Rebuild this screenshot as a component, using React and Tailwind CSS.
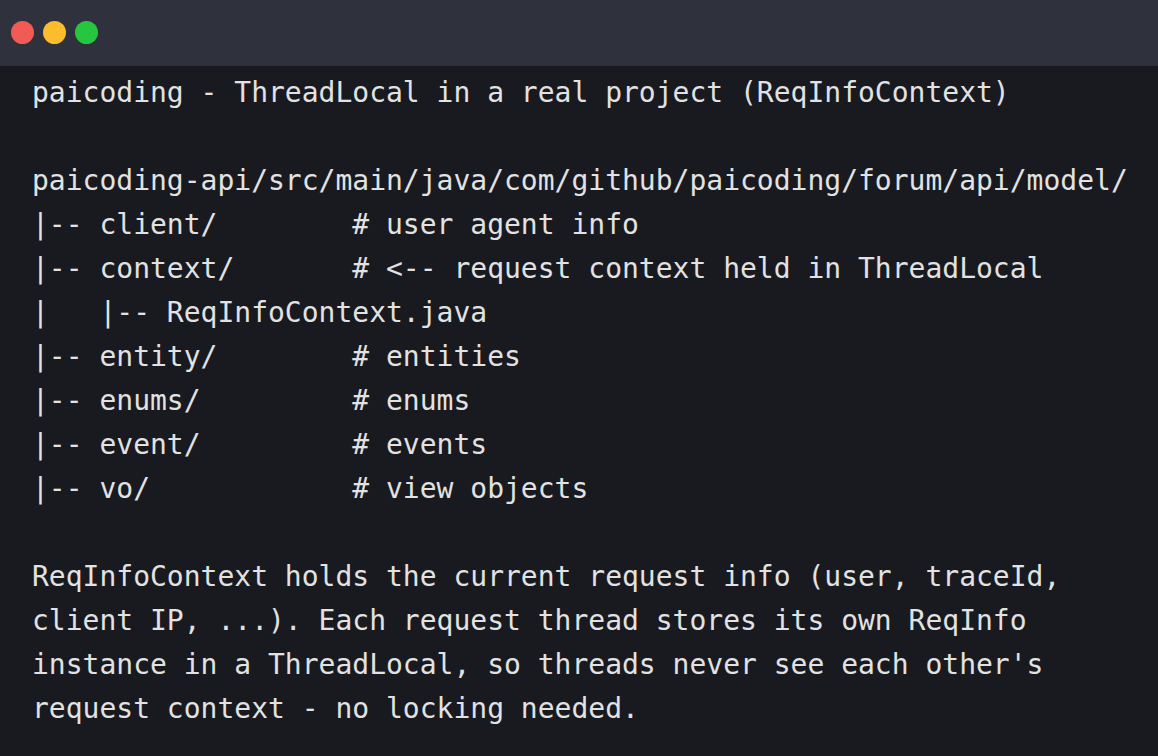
const lines = [
  'paicoding - ThreadLocal in a real project (ReqInfoContext)',
  '',
  'paicoding-api/src/main/java/com/github/paicoding/forum/api/model/',
  '|-- client/        # user agent info',
  '|-- context/       # <-- request context held in ThreadLocal',
  '|   |-- ReqInfoContext.java',
  '|-- entity/        # entities',
  '|-- enums/         # enums',
  '|-- event/         # events',
  '|-- vo/            # view objects',
  '',
  'ReqInfoContext holds the current request info (user, traceId,',
  'client IP, ...). Each request thread stores its own ReqInfo',
  "instance in a ThreadLocal, so threads never see each other's",
  'request context - no locking needed.',
];

export default function App() {
  return (
    <div className="w-[1158px] h-[756px] bg-[#181a20] overflow-hidden">
      <div className="h-[66px] bg-[#2f323c] flex items-center gap-[9px] pl-[11px] pb-[1px]">
        <span className="w-[23px] h-[23px] rounded-full bg-[#f25a55]" />
        <span className="w-[23px] h-[23px] rounded-full bg-[#fbbd2e]" />
        <span className="w-[23px] h-[23px] rounded-full bg-[#27c63f]" />
      </div>
      <pre className="pt-[5px] pl-[32px] text-[28px] leading-[44px] text-[#e2e2e2] font-['DejaVu_Sans_Mono',monospace]">
        {lines.map((l, i) => (
          <div key={i} className="h-[44px]">{l}</div>
        ))}
      </pre>
    </div>
  );
}
